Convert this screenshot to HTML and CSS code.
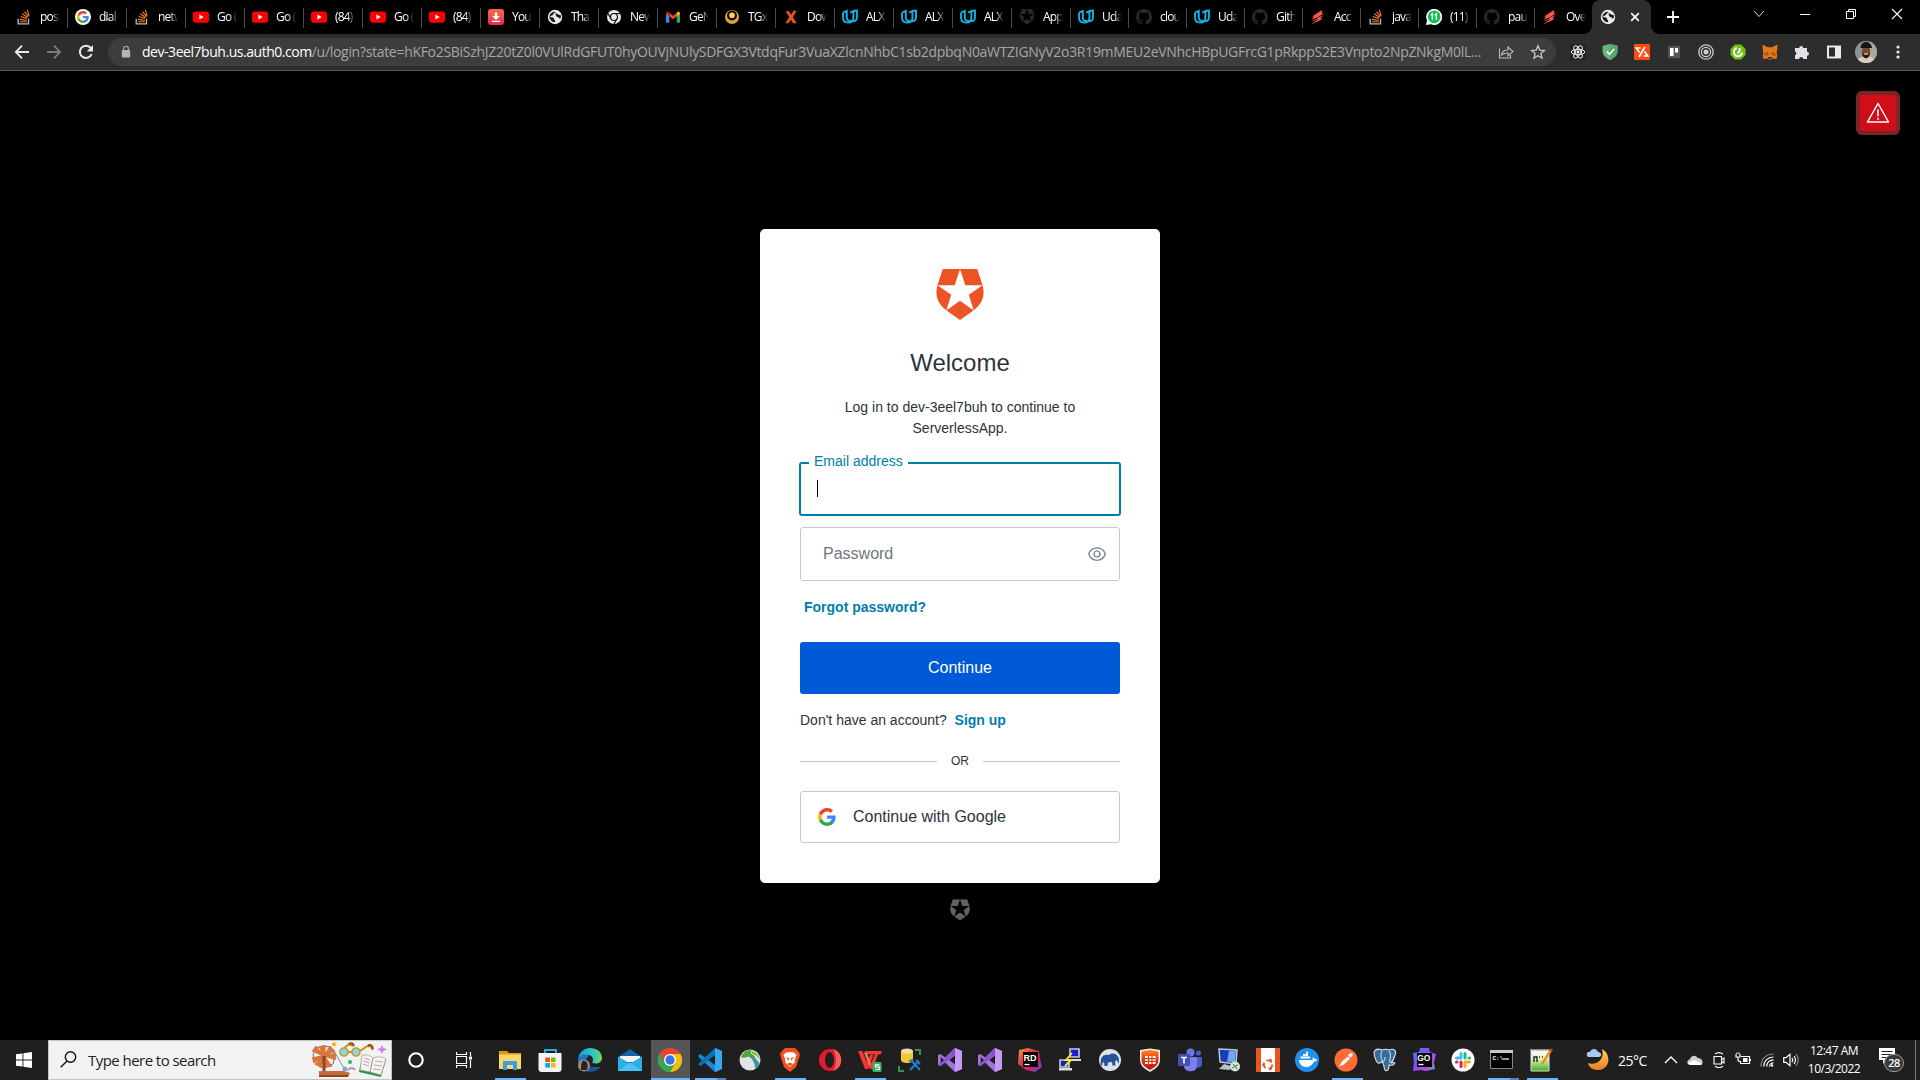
FILE: index.html
```html
<!DOCTYPE html>
<html lang="en">
<head>
<meta charset="utf-8">
<title>Log in | ServerlessApp</title>
<link rel="stylesheet" href="styles.css">
</head>
<body>
<svg class="defs" width="0" height="0" aria-hidden="true">
  <defs>
    <linearGradient id="gEdge" x1="0" y1="0" x2="1" y2="0"><stop offset="0" stop-color="#1b9de2"/><stop offset=".6" stop-color="#2fc3c9"/><stop offset="1" stop-color="#6fdc4c"/></linearGradient>
    <linearGradient id="gDl" x1="0" y1="0" x2="0" y2="1"><stop offset="0" stop-color="#ff6a3c"/><stop offset="1" stop-color="#e6275f"/></linearGradient>
    <linearGradient id="gRd" x1="0" y1="0" x2="1" y2="1"><stop offset="0" stop-color="#f7a12c"/><stop offset=".4" stop-color="#e5314b"/><stop offset=".7" stop-color="#d21c6b"/><stop offset="1" stop-color="#0b6cff"/></linearGradient>
    <linearGradient id="gGo" x1="0" y1="0" x2="1" y2="1"><stop offset="0" stop-color="#3b7cf0"/><stop offset=".45" stop-color="#8a4cf0"/><stop offset=".75" stop-color="#b04ce8"/><stop offset="1" stop-color="#28d18a"/></linearGradient>
    <linearGradient id="gMoon" x1="0" y1="0" x2="0" y2="1"><stop offset="0" stop-color="#ffce58"/><stop offset="1" stop-color="#ee7f22"/></linearGradient>
    <linearGradient id="gFort" x1="0" y1="0" x2="0" y2="1"><stop offset="0" stop-color="#ff8a1c"/><stop offset=".5" stop-color="#e0350f"/><stop offset="1" stop-color="#c0140f"/></linearGradient>
    <linearGradient id="gNote" x1="0" y1="0" x2="0" y2="1"><stop offset="0" stop-color="#fff"/><stop offset=".4" stop-color="#e4f4c0"/><stop offset="1" stop-color="#3fae20"/></linearGradient>
  </defs>
  <symbol id="so" viewBox="0 0 16 16"><path d="M2.200 9.800v5h10.300v-5" fill="none" stroke="#bcbbbb" stroke-width="1.300"/><path d="M4 12.700h6.800M4.100 10.400l6.700.8M4.800 7.500l6.300 2.100M6.300 4.800l5.300 3.700M8.600 2.600l4 5M11.300.9l1.900 6" stroke="#f48024" stroke-width="1.100" fill="none"/></symbol>
  <symbol id="google" viewBox="0 0 48 48"><path fill="#4285f4" d="M47 24.500c0-1.600-.1-3.200-.4-4.700H24v9h12.900c-.6 3-2.300 5.500-4.800 7.200v6h7.700C44.400 37.900 47 31.800 47 24.500z"/><path fill="#34a853" d="M24 48c6.500 0 11.900-2.100 15.900-5.800l-7.700-6C30 37.700 27.300 38.600 24 38.600c-6.300 0-11.600-4.200-13.500-9.900H2.600v6.200C6.500 42.600 14.600 48 24 48z"/><path fill="#fbbc05" d="M10.500 28.700c-1-3-1-6.300 0-9.300v-6.200H2.600a24 24 0 0 0 0 21.600z"/><path fill="#ea4335" d="M24 9.500c3.500 0 6.700 1.200 9.200 3.600l6.900-6.900C35.900 2.300 30.500 0 24 0 14.600 0 6.500 5.400 2.600 13.300l7.900 6.100C12.400 13.700 17.700 9.500 24 9.500z"/></symbol>
  <symbol id="gtab" viewBox="0 0 16 16"><circle cx="8" cy="8" r="8" fill="#fff"/><use href="#google" x="2" y="2" width="12" height="12"/></symbol>
  <symbol id="yt" viewBox="0 0 16 16"><rect y="2.400" width="16" height="11.400" rx="2.800" fill="#f00"/><path d="M6.400 5.600v5L10.700 8.100z" fill="#fff"/></symbol>
  <symbol id="dl" viewBox="0 0 16 16"><rect width="16" height="16" rx="3" fill="url(#gDl)"/><path d="M6.700 3.500h2.600v3.700H12L8 11 4 7.200h2.700zM4 11.700h8v1.300H4z" fill="#fff"/></symbol>
  <symbol id="globe" viewBox="0 0 16 16"><circle cx="8" cy="8" r="7.200" fill="#e8eaed"/><path d="M8.300 2.500c-1 1-.2 1.500-1.300 2-1 .3-.8 1.500-1.600 1.800L3 7.200c.5 1.300 2 1 3 1.300 1.500.3.500 1.700 1.500 2.200.8.500.7 1.500.6 2.300-1.500.4-3-.2-3.800-1.200C3 10.500 2.300 9 2.400 7.300 2.800 5 5 2.700 8.300 2.500z" fill="#1a1a1a"/><path d="M8.700 3.500c.6 1.500 2 1 2.500 1.800.6.900 1.300.9 2.300.6.500 1 .5 2.200.2 3.200-1 .8-2.200 0-2.600-1C9.800 7.900 9 7.400 8.800 6.500 9.400 5.500 8 4.500 8.700 3.500z" fill="#1a1a1a"/></symbol>
  <symbol id="chromeg" viewBox="0 0 16 16"><circle cx="8" cy="8" r="7" fill="#e8eaed"/><circle cx="8" cy="8" r="3.500" fill="none" stroke="#111" stroke-width="1.200"/><path d="M8 4.500h6.300M5 9.700L1.800 4.300M11 9.800L7.800 15.200" stroke="#111" stroke-width="1.200"/></symbol>
  <symbol id="gmail" viewBox="0 0 16 16"><path d="M1 4.500v8.300c0 .500.400.9.9.9h2.400V6.200z" fill="#4285f4"/><path d="M15 4.500v8.300c0 .500-.4.9-.9.9h-2.400V6.200z" fill="#34a853"/><path d="M4.300 3.800L8 6.800l3.700-3v3.600L8 10.300 4.300 7.400z" fill="#ea4335"/><path d="M1 4.200c0-1.400 1.500-2 2.600-1.100l.7.600v3.700L1 5z" fill="#c5221f"/><path d="M15 4.200c0-1.400-1.500-2-2.600-1.100l-.7.600v3.700L15 5z" fill="#fbbc04"/></symbol>
  <symbol id="tgx" viewBox="0 0 16 16"><circle cx="8" cy="8" r="7" fill="#d9a243"/><circle cx="8" cy="6.500" r="5" fill="#141008"/><circle cx="8" cy="6.200" r="2.800" fill="#ffd15c"/></symbol>
  <symbol id="xx" viewBox="0 0 16 16"><path d="M2.500 2.200h3.500l2.200 3.600L10.500 1.800h3.200L9.900 8.100l3.800 6.200h-3.600L8 10.700 5.500 14.300h-3.200l4-6.200z" fill="#e8531d"/></symbol>
  <symbol id="uda" viewBox="0 0 16 16"><path d="M1 3.700L4.800 2v6.500c0 3 2.500 4 4.600 3.300M5.800 13.600C2.800 13.600 1 11.600 1 8.300V3.700M8.200 3.700L11.400 2v6.700c0 3-2 5.400-5.600 4.900M11.400 2l3.600-.5v6.700c0 3-2.300 4.300-4.600 3.700" fill="none" stroke="#12b1e0" stroke-width="1.900"/></symbol>
  <symbol id="auth0" viewBox="0 0 48 52"><path fill-rule="evenodd" d="M6.800 0H41.200L46.500 16C49.500 27 46 35 37.500 41.500L24 51 10.500 41.500C2 35-1.500 27 1.500 16zM24 0L18.700 16.200H1.500L15.200 25.800 10.300 41.500 24 31.700 37.700 41.500 32.800 25.800 46.500 16.200H29.300z" fill="currentColor"/></symbol>
  <symbol id="git" viewBox="0 0 16 16"><path fill="currentColor" d="M8 0C3.580 0 0 3.580 0 8c0 3.540 2.290 6.530 5.470 7.590.4.070.55-.17.55-.38 0-.19-.01-.82-.01-1.490-2.010.37-2.530-.49-2.690-.94-.09-.23-.48-.94-.82-1.130-.28-.15-.68-.52-.01-.53.63-.01 1.080.58 1.230.82.72 1.210 1.870.87 2.330.66.070-.52.28-.87.51-1.070-1.780-.2-3.640-.89-3.640-3.950 0-.87.31-1.590.82-2.150-.08-.2-.36-1.020.08-2.120 0 0 .67-.21 2.200.82a7.600 7.600 0 0 1 4 0c1.530-1.040 2.200-.82 2.200-.82.44 1.100.16 1.920.08 2.120.51.56.82 1.270.82 2.150 0 3.070-1.870 3.750-3.650 3.950.29.25.54.73.54 1.480 0 1.070-.01 1.930-.01 2.200 0 .21.15.46.55.38A8.010 8.010 0 0 0 16 8c0-4.420-3.580-8-8-8z"/></symbol>
  <symbol id="bolt" viewBox="0 0 16 16"><path d="M12.500.8L2.500 7.200l1.200.8L1.500 10.500 9 7.700l5.300-4-2.600.6z" fill="#fd5750"/><path d="M13.800 6L6 9.500l2 .6L1.300 15.500 12.500 10l-2-.7z" fill="#fd5750"/><path d="M2.500 11.900l4-2" stroke="#fd5750" stroke-width=".9"/></symbol>
  <symbol id="wa" viewBox="0 0 16 16"><path d="M0 16l1-4.500A8 8 0 1 1 5 15.300z" fill="#fff"/><circle cx="8.200" cy="7.800" r="6.400" fill="#12c154"/><path d="M4.700 6.200l1.700-1.400v6M8.700 6.200l1.700-1.400v6" stroke="#fff" stroke-width="1.400" fill="none"/></symbol>
  <symbol id="vs" viewBox="0 0 24 24"><path d="M17 0l7 3v18l-7 3L7 14.500 2.500 18 0 17V7l2.500-1L7 9.500z" fill="#a074d8"/><path d="M17 0l7 3v18l-7 3z" fill="#c59af5"/><path d="M17 0v7.500L2.500 18 0 17z" fill="#8a55c8"/><path d="M17 7.500v9L11.500 12zM2.800 9v6l3-3z" fill="#1f1f1f"/></symbol>
</svg>

<header class="tabstrip">
  <div class="tab first"><svg><use href="#so"/></svg><span>post</span></div>
  <div class="tab"><svg><use href="#gtab"/></svg><span>dial</span></div>
  <div class="tab"><svg><use href="#so"/></svg><span>netw</span></div>
  <div class="tab"><svg><use href="#yt"/></svg><span>Go (</span></div>
  <div class="tab"><svg><use href="#yt"/></svg><span>Go (</span></div>
  <div class="tab"><svg><use href="#yt"/></svg><span>(84)</span></div>
  <div class="tab"><svg><use href="#yt"/></svg><span>Go (</span></div>
  <div class="tab"><svg><use href="#yt"/></svg><span>(84)</span></div>
  <div class="tab"><svg><use href="#dl"/></svg><span>You</span></div>
  <div class="tab"><svg><use href="#globe"/></svg><span>Tha</span></div>
  <div class="tab"><svg><use href="#chromeg"/></svg><span>New</span></div>
  <div class="tab"><svg><use href="#gmail"/></svg><span>GeN</span></div>
  <div class="tab"><svg><use href="#tgx"/></svg><span>TGx</span></div>
  <div class="tab"><svg><use href="#xx"/></svg><span>Dow</span></div>
  <div class="tab"><svg><use href="#uda"/></svg><span>ALX</span></div>
  <div class="tab"><svg><use href="#uda"/></svg><span>ALX</span></div>
  <div class="tab"><svg><use href="#uda"/></svg><span>ALX</span></div>
  <div class="tab dim"><svg><use href="#auth0"/></svg><span>App</span></div>
  <div class="tab narrow"><svg><use href="#uda"/></svg><span>Uda</span></div>
  <div class="tab narrow dim"><svg><use href="#git"/></svg><span>clou</span></div>
  <div class="tab narrow"><svg><use href="#uda"/></svg><span>Uda</span></div>
  <div class="tab narrow dim"><svg><use href="#git"/></svg><span>Gith</span></div>
  <div class="tab narrow"><svg><use href="#bolt"/></svg><span>Acc</span></div>
  <div class="tab narrow"><svg><use href="#so"/></svg><span>java</span></div>
  <div class="tab narrow"><svg><use href="#wa"/></svg><span>(11)</span></div>
  <div class="tab narrow dim"><svg><use href="#git"/></svg><span>paul</span></div>
  <div class="tab narrow"><svg><use href="#bolt"/></svg><span>Ove</span></div>
  <div class="tab active"><svg><use href="#globe"/></svg><svg class="close" viewBox="0 0 16 16"><path d="M4.200 4.200l7.600 7.600M11.800 4.200l-7.600 7.600" stroke="#fff" stroke-width="1.700"/></svg></div>
  <svg class="plus" viewBox="0 0 16 16"><path d="M8 2v12M2 8h12" stroke="#fff" stroke-width="1.800"/></svg>
  <div class="winctl">
    <svg viewBox="0 0 12 12"><path d="M1 3l5 5.500L11 3" stroke="#ddd" fill="none"/></svg>
    <svg viewBox="0 0 12 12"><path d="M1 6.500h10" stroke="#fff"/></svg>
    <svg viewBox="0 0 12 12"><path d="M1.500 3.500h7v7h-7zM3.500 3.500v-2h7v7h-2" stroke="#fff" fill="none"/></svg>
    <svg viewBox="0 0 12 12"><path d="M1 1l10 10M11 1L1 11" stroke="#fff" stroke-width="1.100"/></svg>
  </div>
</header>

<nav class="toolbar">
  <svg class="nav" viewBox="0 0 16 16"><path d="M15 8H2M8 1.700L1.800 8 8 14.300" stroke="#e8eaed" stroke-width="1.800" fill="none"/></svg>
  <svg class="nav" viewBox="0 0 16 16"><path d="M1 8h13M8 1.700L14.200 8 8 14.300" stroke="#7b7b7b" stroke-width="1.800" fill="none"/></svg>
  <svg class="nav" viewBox="0 0 16 16"><path d="M13.700 10A6.100 6.100 0 1 1 12.600 3.800" stroke="#e8eaed" stroke-width="2" fill="none"/><path d="M15 1v6.500H8.700z" fill="#e8eaed"/></svg>
  <div class="omnibox">
    <svg class="lock" viewBox="0 0 10 14"><path d="M2.500 6V3.800a2.500 2.500 0 0 1 5 0V6" stroke="#9aa0a6" stroke-width="1.300" fill="none"/><rect x=".8" y="5" width="8.400" height="7.500" rx="1" fill="#b0b3b8"/></svg>
    <div class="url"><b>dev-3eel7buh.us.auth0.com</b>/u/login?state=hKFo2SBiSzhJZ20tZ0l0VUlRdGFUT0hyOUVjNUlySDFGX3VtdqFur3VuaXZlcnNhbC1sb2dpbqN0aWTZIGNyV2o3R19mMEU2eVNhcHBpUGFrcG1pRkppS2E3Vnpto2NpZNkgM0lL...</div>
    <svg class="share" viewBox="0 0 16 16"><path d="M1.500 4.500v9.500h11v-3M3.500 11c.5-3.500 3-5 6.500-5V3l5 4.500-5 4.200V9C7 9 5 9.500 3.500 11z" stroke="#bdbdbd" stroke-width="1.100" fill="none"/></svg>
    <svg class="star" viewBox="0 0 16 16"><path d="M8 1.800l1.800 4.300 4.700.4-3.600 3 1.100 4.600L8 11.700 4 14.100l1.100-4.600-3.600-3 4.700-.4z" stroke="#c8c8c8" stroke-width="1.300" fill="none"/></svg>
  </div>
  <div class="exts">
    <svg viewBox="0 0 16 16"><rect width="16" height="16" fill="#232323"/><g fill="none" stroke="#eee" stroke-width="1"><ellipse cx="8" cy="8" rx="6.800" ry="2.700"/><ellipse cx="8" cy="8" rx="6.800" ry="2.700" transform="rotate(60 8 8)"/><ellipse cx="8" cy="8" rx="6.800" ry="2.700" transform="rotate(120 8 8)"/></g><circle cx="8" cy="8" r="1.400" fill="#fff"/></svg>
    <svg viewBox="0 0 16 16"><path d="M8 0l7.500 1.800v5.200c0 4-3 7-7.500 9-4.500-2-7.500-5-7.500-9V1.800z" fill="#67b279"/><path d="M8 0l7.500 1.800v5.200c0 4-3 7-7.500 9z" fill="#5aa56c"/><path d="M4.700 7.500L7.500 10.400 12 5" stroke="#fff" stroke-width="1.600" fill="none"/></svg>
    <svg viewBox="0 0 16 16"><rect width="16" height="16" rx="1" fill="#ff4a12"/><path d="M6.500 4H2.300l3.300 4.500M9.500 12h4.200L10.400 7.500M5 13l5.800-10" stroke="#fff" stroke-width="1.700" fill="none"/></svg>
    <svg viewBox="0 0 16 16"><rect x="2" y="2" width="12" height="12" fill="#555"/><path d="M4 4h3.600v8H4zM9 4h3v4.500H9z" fill="#fff"/></svg>
    <svg viewBox="0 0 16 16"><g fill="none" stroke="#ccc" stroke-width="1.300"><circle cx="8" cy="8" r="7.200"/><circle cx="8" cy="8" r="4.600"/></g><circle cx="8" cy="8" r="2.500" fill="#ccc"/></svg>
    <svg viewBox="0 0 16 16"><path d="M5 .5h6L15.500 5v6L11 15.500H5L.5 11V5z" fill="#6fc114"/><path d="M6.800 3.600C3.800 5 3.200 8.500 4.800 10.800c2.200 2.800 6.700 1.500 7.200-2.300M7.200 8.700c1.800.2 2.700-1.500 2.500-4.700" fill="none" stroke="#fff" stroke-width="2"/></svg>
    <svg viewBox="0 0 16 16"><path d="M.5.500L6 3.300h4L15.500.5l-.2 4.500-.7 4 .7 2.500-1 3.700-3.500-1-1.500 1.300H6.700l-1.500-1.300-3.500 1-1-3.700.7-2.500-.7-4z" fill="#e2761b"/><path d="M3 8.500l3 1-1.300 2.800-3.200-1zM13 8.500l-3 1 1.300 2.800 3.200-1z" fill="#b85b12"/><path d="M4.500 8.200l2 .8-.8 1zM11.500 8.200l-2 .8.800 1zM6.300 13h3.400l.3 1.500H6z" fill="#222"/></svg>
    <svg viewBox="0 0 16 16"><path d="M1 4h4.200a2 2 0 1 1 4 0H13v3.700a2 2 0 1 1 0 4V15H9.200a2 2 0 0 0-4 0H1v-3.800a2 2 0 0 0 0-3.800z" fill="#dfe1e5"/></svg>
    <svg viewBox="0 0 16 16"><path fill-rule="evenodd" d="M1 1.500h14v13H1zM3 3.500v9h6v-9z" fill="#e8eaed"/></svg>
    <svg class="avatar" viewBox="0 0 22 22"><clipPath id="av"><circle cx="11" cy="11" r="11"/></clipPath><g clip-path="url(#av)"><rect width="22" height="22" fill="#8f9294"/><rect x="14" width="8" height="22" fill="#aaa69e"/><path d="M2 22c0-5 4-7 9-6 6-1 9 2 9 6z" fill="#dccbbd"/><ellipse cx="11" cy="10.500" rx="4.200" ry="6" fill="#74482f"/><path d="M5.500 7C6-1 16-1 17 7z" fill="#171614"/><path d="M7 12c1 7 7 7 8 0l-2 1.500H9z" fill="#21150f"/><path d="M9.200 13h3.800" stroke="#fff" stroke-width="1.200"/></g></svg>
    <svg viewBox="0 0 16 16"><g fill="#e8eaed"><circle cx="8" cy="3" r="1.600"/><circle cx="8" cy="8" r="1.600"/><circle cx="8" cy="13" r="1.600"/></g></svg>
  </div>
</nav>

<main class="page">
  <div class="alert"><svg viewBox="0 0 24 22"><path d="M12 1.500L22.500 20H1.500z" fill="none" stroke="#fff" stroke-width="1.500" stroke-linejoin="round"/><path d="M12 7.500v6.800M12 15.800v1.900" stroke="#fff" stroke-width="1.600"/></svg></div>
  <section class="card">
    <svg class="logo" viewBox="0 0 48 52"><use href="#auth0"/></svg>
    <h1>Welcome</h1>
    <p class="sub">Log in to dev-3eel7buh to continue to ServerlessApp.</p>
    <div class="field email"><label>Email address</label><i class="caret"></i></div>
    <div class="field password"><span>Password</span><svg viewBox="0 0 18 14"><path d="M.7 7C3.500-1.300 14.500-1.300 17.300 7 14.500 15.300 3.500 15.300.7 7z" fill="none" stroke="#6f7780" stroke-width="1.200"/><circle cx="9" cy="7" r="3" fill="none" stroke="#6f7780" stroke-width="1.200"/></svg></div>
    <a class="forgot">Forgot password?</a>
    <button class="primary">Continue</button>
    <p class="signup">Don't have an account? <a>Sign up</a></p>
    <div class="or"><span>OR</span></div>
    <button class="social"><svg><use href="#google"/></svg>Continue with Google</button>
  </section>
  <svg class="badge" viewBox="0 0 48 52"><use href="#auth0"/></svg>
</main>

<footer class="taskbar">
  <div class="start"><svg viewBox="0 0 16 16"><path d="M0 2.300l6.500-.9v6.100H0zM7.400 1.200L16 0v7.500H7.400zM0 8.400h6.500v6.200L0 13.700zM7.400 8.400H16V16l-8.600-1.200z" fill="#fff"/></svg></div>
  <div class="search">
    <svg class="glass" viewBox="0 0 17 17"><circle cx="10.500" cy="6" r="5.200" fill="none" stroke="#111" stroke-width="1.400"/><path d="M7 10L.7 16.300" stroke="#111" stroke-width="1.400"/></svg>
    <span>Type here to search</span>
    <svg class="doodle" viewBox="0 0 76 36"><path d="M11 4l8 1 4 8-2 9-9 3-9-4-2-8 3-7z" fill="none" stroke="#647089"/><path d="M12 14L8 5l5-1zM12 14l6-9 4 4zM12 14l11-2v5zM12 14l7 10-5 1zM12 14l-3 11-5-3zM12 14L2 20l-1-4zM12 14L1 9l3-4z" fill="#d9773c" stroke="#d9773c" stroke-width="1.800"/><path d="M12 14v16" stroke="#8e4722" stroke-width="3"/><path d="M7 29h25l6 2-2 4H7z" fill="#c66d36"/><path d="M7 33h29v2H7z" fill="#8e4722"/><path d="M22 9l8 14 5 6" fill="none" stroke="#7f8aa0"/><circle cx="33" cy="27" r="2.500" fill="#8fa4cc"/><path d="M36 28q4-4 7 0" stroke="#9c7fb5" fill="none" stroke-width="1.500"/><path d="M29 9l8-7 4 2M48 9l9-6 4 5M36 10h5" fill="none" stroke="#c98c14" stroke-width="2"/><path d="M37 2q4-2 5 2M56 4q4-3 5 3" fill="none" stroke="#8a4d2b" stroke-width="2"/><circle cx="32" cy="10" r="4" fill="#7adcf5" stroke="#d79a17" stroke-width="1.600"/><circle cx="44" cy="10" r="4" fill="#7adcf5" stroke="#d79a17" stroke-width="1.600"/><circle cx="22" cy="2.300" r="2" fill="#ffb000"/><circle cx="38" cy="20" r="2" fill="#21bd5b"/><path d="M70 3l1.500 3L75 7.500 71.500 9 70 12l-1.500-3L65 7.500 68.500 6z" fill="#d77bf2"/><path d="M50 15l-3 15 22 5 5-17z" fill="#2e9140"/><path d="M50 13l-2 15 10 2 3-14q-4-4-11-3zM61 16l-3 14 11 3 5-16q-6-4-13-1z" fill="#f8f3ef" stroke="#8fa08f" stroke-width=".7"/><path d="M52 16l6 2M51.500 19l6 2M51 22l6 2M63 19l8 1M62 23l8 1M61 27l8 1" stroke="#b6a5c0"/></svg>
  </div>
  <div class="sys"><svg viewBox="0 0 16 16"><circle cx="8" cy="8" r="6.700" fill="none" stroke="#fff" stroke-width="2.100"/></svg></div>
  <div class="sys"><svg viewBox="0 0 16 16"><path d="M.5 0v2.500h10V0M.5 16v-2.500h10V16M.5 4.500h10v7H.5zM14.500 0v4M14.500 8v8" fill="none" stroke="#fff" stroke-width="1.200"/><path d="M13 4.500h3v3h-3z" fill="#fff"/></svg></div>
  <div class="apps">
    <div class="app run"><svg viewBox="0 0 24 24"><path d="M1 3h8l2 2h12v15H1z" fill="#dc9a12"/><path d="M1 6.500h22V21H1z" fill="#fcd667"/><path d="M5 13h14v9h-4v-5H9v5H5z" fill="#3f9be2"/></svg></div>
    <div class="app"><svg viewBox="0 0 24 24"><path d="M7 6V2h11v4" fill="none" stroke="#23afe5" stroke-width="2"/><path d="M.5 5h23v16q0 3-3 3h-17q-3 0-3-3z" fill="#f4f4f4"/><path d="M7.300 9.500H12v4.500H7.300z" fill="#f25022"/><path d="M13 9.500h4.500v4.500H13z" fill="#7fba00"/><path d="M7.300 15H12v4.500H7.300z" fill="#00a4ef"/><path d="M13 15h4.500v4.500H13z" fill="#ffb900"/></svg></div>
    <div class="app"><svg viewBox="0 0 24 24"><path d="M.5 11C1-4 24-3 24 10c0 5-6 7-10 4.500 3-4-1-8-5-7.500C5 7 1 9 .5 11z" fill="url(#gEdge)"/><path d="M0 12c1-5 7-7 11-4-5 3-4 13 11 11-5 7-22 7-22-7z" fill="#1e78c2"/><path d="M9.500 9c-4 5 2 13 12.500 10-6 7-17 3-16-4 0-3 1-5 3.500-6z" fill="#15539a"/><circle cx="6" cy="17.500" r="6" fill="#9b8c80"/><path d="M3 22c0-8 1-10 4-9s3 5 2 9z" fill="#30211b"/></svg></div>
    <div class="app"><svg viewBox="0 0 24 24"><path d="M0 9l12-8 12 8v5H0z" fill="#1262ae"/><path d="M2 8h20v6H2z" fill="#f5f5f5"/><path d="M0 8.500l12 7 12-7V23H0z" fill="#29aee8"/><path d="M0 23l12-9 12 9z" fill="#48c4f5"/></svg></div>
    <div class="app current"><svg viewBox="0 0 24 24"><circle cx="12" cy="12" r="12" fill="#34a853"/><path d="M12 12L1.600 6A12 12 0 0 1 22.400 6z" fill="#ea4335"/><path d="M12 6h10.400A12 12 0 0 1 12 24l5-9z" fill="#fbbc05"/><path d="M1.600 6l5.200 9L12 12z" fill="#ea4335"/><path d="M1.600 6A12 12 0 0 0 12 24l5.200-9H6.800z" fill="#34a853"/><circle cx="12" cy="12" r="6" fill="#fff"/><circle cx="12" cy="12" r="4.700" fill="#3574e8"/></svg></div>
    <div class="app run multi"><svg viewBox="0 0 24 24"><path d="M17 0l7 3v18l-7 3L2 10.500 0 8l2-2 3 2 12 9z" fill="#1a8ad4"/><path d="M17 0v7L2.500 18 0 16z" fill="#0d6fb5"/><path d="M17 0l7 3v18l-7 3z" fill="#35a8f0"/></svg></div>
    <div class="app"><svg viewBox="0 0 24 24"><circle cx="12" cy="12" r="10.500" fill="#dfe3e3"/><path d="M3 9C5 4 9 1 14 2.500c-2 1.500-1 3.500 1 4.500 3 1.500 3 5 1 8-1-4-4-7-7-6-2 .5-4 1.500-6 0z" fill="#55a63a"/><path d="M11 8c4-1 8 4 11 8-1 2-3 4-5 5 .5-5-2-10-6-13z" fill="#3c93a8"/><path d="M14 3c4 1 7 4 8 8-2-1-3-3-5-4-2 0-4-2-3-4z" fill="#7cc04c"/></svg></div>
    <div class="app run"><svg viewBox="0 0 24 24"><path d="M7 0h10l3 3 2 3-1 4-3 9-6 5-6-5-3-9-1-4 2-3z" fill="#f4501e"/><path d="M12 4l4 .5 2.500 2.500-2 5 .5 2-5 5-5-5 .5-2-2-5L8 4.500z" fill="#fff"/><path d="M8 9l3 1v3zM16 9l-3 1v3zM9 16l3-1.500 3 1.500-3 2z" fill="#f4501e"/></svg></div>
    <div class="app"><svg viewBox="0 0 24 24"><circle cx="12" cy="12" r="11" fill="#e31b2f"/><path d="M15 1c11 3 11 19 0 22 4-6 4-16 0-22z" fill="#ff5a5f"/><ellipse cx="11.500" cy="12" rx="4.500" ry="7.700" fill="#1f1f1f"/></svg></div>
    <div class="app run"><svg viewBox="0 0 24 24"><path d="M0 3h4.500L9 15l3-8h3.500L10 21H7z" fill="#f2392e"/><path d="M8 3h16l-1.500 3.500H20L14.500 21h-3L8.500 13l1.500-3 3 5.500L17 6.500H9.500z" fill="#f2392e"/><path d="M8 3l5 12-1.500 3L6 5z" fill="#ff7061"/><rect x="14.500" y="14" width="9" height="10" rx="1.500" fill="#3eae63"/><path d="M21.500 16.800h-4v2.200h4v2.500h-4" stroke="#fff" fill="none" stroke-width="1.200"/></svg></div>
    <div class="app"><svg viewBox="0 0 24 24"><path d="M3 3v9c0 4 12 4 12 0V3z" fill="#f4c92f"/><ellipse cx="9" cy="3.200" rx="6" ry="2.700" fill="#f8d9a8"/><path d="M17 2h5v5M6 23H1v-5" fill="none" stroke="#3b9445" stroke-width="2"/><path d="M12 22l9-9M13 12l9 10M18 12l4 4M11 13l4-1" stroke="#237ed0" stroke-width="2"/></svg></div>
    <div class="app"><svg><use href="#vs"/></svg></div>
    <div class="app"><svg><use href="#vs"/></svg></div>
    <div class="app"><svg viewBox="0 0 24 24"><path d="M1 2l9-2 11 3 1 8 2 8-7 5-9-2-8-6z" fill="url(#gRd)"/><rect x="5" y="4" width="15" height="15" fill="#000"/><text x="5.500" y="12.500" class="ide">RD</text><path d="M6.500 16.500h5" stroke="#fff" stroke-width="1.300"/></svg></div>
    <div class="app"><svg viewBox="0 0 24 24"><path d="M12 1h9v8h-9zM2 12h9v7H2z" fill="#1220d8" stroke="#ccc" stroke-width="1.600"/><path d="M10 11h13v2H10zM1 20h13v2.500H1z" fill="#ddd"/><path d="M14 5l-6 7h5l-6 6" fill="none" stroke="#ffec1f" stroke-width="1.800"/></svg></div>
    <div class="app"><svg viewBox="0 0 24 24"><circle cx="12" cy="12" r="11" fill="#dde2e7"/><path d="M3 11c1-4 5-5 8-4 3-2.500 7-1.500 8.500 1 1.500 1.500 1.500 4 1.500 6l-1 1.500-1-3.500-2 1.500.5 4h-3l-.5-3.500-4 .5-.5 3.500H6.500L6 14l-1.500 1L4 18l-1.500-1z" fill="#24539b"/></svg></div>
    <div class="app"><svg viewBox="0 0 24 24"><path d="M2 2l10-1.500L22 2v10c0 6-5 9-10 12C7 21 2 18 2 12z" fill="#eee"/><path d="M3.500 3.500L12 2l8.500 1.500V12c0 5-4 7.500-8.500 10-4.500-2.500-8.500-5-8.500-10z" fill="url(#gFort)"/><path d="M7 8h10.500v8H7z" fill="#fff"/><path d="M7 10.700h10.500M7 13.300h10.500M10.500 8v8M14 8v8" stroke="#dc3a12" stroke-width="1.200"/></svg></div>
    <div class="app"><svg viewBox="0 0 24 24"><circle cx="12.500" cy="4.500" r="4" fill="#6c76dd"/><circle cx="20.500" cy="5" r="2.600" fill="#4d59c4"/><path d="M16 9h8v8q-2 4-6 2z" fill="#4d59c4"/><path d="M6 9h13v9c0 7-13 7-13 0z" fill="#7681ea"/><rect y="6" width="12" height="12" rx="1" fill="#444eb4"/><path d="M3 9.500h6M6 9.500v6" stroke="#fff" stroke-width="1.600"/></svg></div>
    <div class="app slim"><svg viewBox="0 0 24 24"><path d="M2 1l18 1-1 14-16-2z" fill="#183bb9" stroke="#bcc6cd" stroke-width="1.500"/><path d="M12 3l7-.5-1 12-8-1z" fill="#6fa6ef"/><path d="M7 16l7 2-1 4-11-1z" fill="#bbc2c7"/><circle cx="18" cy="18.500" r="5" fill="#d8e4d8"/><path d="M15 20l3-1.500L16 16M21 17l-3 1 2 3" stroke="#31883d" fill="none"/></svg></div>
    <div class="app n"><svg viewBox="0 0 24 24"><path d="M0 0h24v24H0z" fill="#e95420"/><path d="M5 0h14v24H5z" fill="#fff"/><circle cx="12" cy="16.500" r="4.200" fill="none" stroke="#e95420" stroke-width="1.800" stroke-dasharray="6 2.800"/><circle cx="7.500" cy="17" r="1.300" fill="#e95420"/><circle cx="14.500" cy="12" r="1.300" fill="#e95420"/><circle cx="14.500" cy="21" r="1.300" fill="#e95420"/></svg></div>
    <div class="app n"><svg viewBox="0 0 24 24"><circle cx="12" cy="12" r="12" fill="#1f91ee"/><path d="M4 12h13c1 0 1-2 .5-3l3 2.200 2 .3c-.7 1.500-2 2-3.500 2-4 9-15 6-15-1.500z" fill="#fff"/><path d="M5.500 9.500h9.500M8 7h5M11 4.700h2" stroke="#fff" stroke-width="2"/></svg></div>
    <div class="app n run"><svg viewBox="0 0 24 24"><circle cx="12" cy="12" r="11.500" fill="#ff6c37"/><path d="M5 18.500l3-5 6-5 2 2-6 6zM14 7.500l1.500-2 3-.5v3l-2 1.500z" fill="#fff"/></svg></div>
    <div class="app n"><svg viewBox="0 0 24 24"><path d="M8 14C4 19 1 8 1 4c2-4 6-3 8-2 3-1 5-1 7 0 5-2 8 1 6 5-1 4-2 6-4 8 3-1 5 0 3 1-1 2-4 1-5 1 0 7-5 8-5 1l-1-3z" fill="#376b98" stroke="#d9e4ed" stroke-width="1.100"/><path d="M9 3c-2 4-1 8 1 11M16 3c3 4 0 8 1 12M9 13c2 1 3-1 3-4" fill="none" stroke="#e4edf4" stroke-width="1"/></svg></div>
    <div class="app n"><svg viewBox="0 0 24 24"><path d="M1 5l6-1 1-4h9l1 4 6 2-2 9 1 6-9 2-5-1-8 1 1-8z" fill="url(#gGo)"/><rect x="5" y="5" width="15" height="14" fill="#000"/><text x="5.200" y="13" class="ide go">GO</text><path d="M6.500 16.500h5" stroke="#fff" stroke-width="1.300"/></svg></div>
    <div class="app n"><svg viewBox="0 0 24 24"><circle cx="12" cy="12" r="11.500" fill="#fff"/><g stroke-width="3" stroke-linecap="round"><path d="M10 5.500v4.500M5.500 10H10" stroke="#36c5f0"/><path d="M14 5.500V10M18.500 10H18" stroke="#2eb67d"/><path d="M14 14v4.500M14 14h4.500" stroke="#ecb22e"/><path d="M5.500 14H6M10 14v4.500" stroke="#e01e5a"/></g></svg></div>
    <div class="app n run multi"><svg viewBox="0 0 24 24"><path d="M.5 2.500h22v18H.5z" fill="#000" stroke="#888"/><path d="M0 2h23v3H0z" fill="#c9c9c9"/><text x="2.500" y="11.500" class="cmd">C:\</text><path d="M13 11h6" stroke="#fff" stroke-width="1.200"/></svg></div>
    <div class="app n run"><svg viewBox="0 0 24 24"><path d="M2 2h18v21H2z" fill="url(#gNote)" stroke="#ddd"/><path d="M1 2h20" stroke="#999" stroke-width="2" stroke-dasharray="1.500 1.500"/><path d="M5 14V9h3v5M10 9h1M13 9h1" stroke="#222" stroke-width="1.400" fill="none"/><path d="M22 2l-9 14" stroke="#e69a22" stroke-width="2.700"/><path d="M23 1l-1.500 2.300" stroke="#c93a2b" stroke-width="3"/></svg></div>
  </div>
  <div class="tray">
    <svg class="moon" viewBox="0 0 24 24"><path d="M16 1c10 5 8 21-4 21C6 22 3 19 2 15c9 3 17-4 14-14z" fill="url(#gMoon)"/><path d="M2 9c-3-3 0-6 2-5 1-4 7-4 8 0 4 0 4 5 1 5z" fill="#a9c8f5"/></svg>
    <span class="temp">25°C</span>
    <svg class="t chev" viewBox="0 0 16 16"><path d="M2 11l6-6 6 6" fill="none" stroke="#fff" stroke-width="1.400"/></svg>
    <svg class="t" viewBox="0 0 16 16"><path d="M3 13c-4-1-3-5-.3-5.500C4 3 9 2.500 10.500 6 15 6 17 10 14.500 12.500L13 13z" fill="#cfcfcf"/><path d="M.5 11.500l6.500-3.500 8.500 4-2 1H3z" fill="#fff"/></svg>
    <svg class="t" viewBox="0 0 16 16"><path d="M3 4.500h7.500v7.500H3zM10.500 7.500L13 6v5l-2.500-1.500M4 2Q8-.8 12 2M4 14.300q4 2.600 8 0" fill="none" stroke="#fff" stroke-width="1.100"/></svg>
    <svg class="t" viewBox="0 0 16 16"><path d="M6 4.500h8.500v7H5.500V9M15.500 7v2M1 2v3h4V2M2 .5V2M4 .5V2M3 5v3q0 1.500 3 1.500" fill="none" stroke="#fff" stroke-width="1.200"/><path d="M8 6h4.500v4H8z" fill="#fff"/></svg>
    <svg class="t" viewBox="0 0 16 16"><g fill="none" stroke-width="1.200"><path d="M2 14.500C2 7 7 2 14.500 2" stroke="#888"/><path d="M4.800 14.500C4.800 9 9 5 14.500 5M7.700 14.500c0-4 3-6.700 6.800-6.700M10.500 14.500c0-2 1.700-3.700 4-3.700" stroke="#fff"/></g><circle cx="13" cy="13.500" r="1.200" fill="#fff"/></svg>
    <svg class="t" viewBox="0 0 16 16"><path d="M.7 5.700H3l4-3.500v11.600l-4-3.500H.7z" fill="none" stroke="#fff" stroke-width="1.200"/><path d="M9 5.800q1.600 2.200 0 4.400M11 4q3 4 0 8" fill="none" stroke="#fff" stroke-width="1.200"/><path d="M13 2.200q4.500 5.800 0 11.600" fill="none" stroke="#888" stroke-width="1.200"/></svg>
    <div class="clock"><span>12:47 AM</span><span>10/3/2022</span></div>
    <div class="notif"><svg viewBox="0 0 16 16"><path d="M0 0h16v12H7l-3 4v-4H0z" fill="#fff"/><path d="M2.500 3.500h11M2.500 6.500h11M2.500 9.500h7" stroke="#222"/></svg><b>28</b></div>
    <i class="peek"></i>
  </div>
</footer>
</body>
</html>
```
FILE: styles.css
```css
* { box-sizing: border-box; }
body { margin: 0; width: 1920px; height: 1080px; overflow: hidden; background: #000; display: flex; flex-direction: column; font-family: "Open Sans", "Noto Sans", sans-serif; }
svg { display: block; flex: none; }
.defs { position: absolute; }

/* tab strip */
.tabstrip { height: 34px; flex: none; display: flex; padding-left: 8px; background: #000; }
.tab { width: 59px; height: 34px; flex: none; display: flex; align-items: center; padding-left: 8px; background: linear-gradient(#4a4a4a, #4a4a4a) 0 8px / 1px 20px no-repeat; }
.tab.narrow { width: 58px; }
.tab.first { background: none; }
.tab svg { width: 16px; height: 16px; }
.tab span { margin-left: 8px; width: 20px; overflow: hidden; white-space: nowrap; font-size: 12px; letter-spacing: -0.8px; line-height: 18px; color: #fff; -webkit-mask-image: linear-gradient(90deg, #000 60%, transparent); mask-image: linear-gradient(90deg, #000 60%, transparent); }
.tab.dim svg { color: #24292f; }
.tab.active { position: relative; width: 59px; background: #2d2d2d; border-radius: 8px 8px 0 0; }
.tab.active::before, .tab.active::after { content: ""; position: absolute; bottom: 0; width: 8px; height: 8px; }
.tab.active::before { left: -8px; background: radial-gradient(circle at 0 0, transparent 7.5px, #2d2d2d 8px); }
.tab.active::after { right: -8px; background: radial-gradient(circle at 100% 0, transparent 7.5px, #2d2d2d 8px); }
.tab .close { margin-left: 11px; }
.plus { width: 16px; height: 16px; margin: 9px 0 0 14px; }
.winctl { margin-left: auto; display: flex; gap: 34px; padding: 8px 17px 0 0; }
.winctl svg { width: 12px; height: 12px; }

/* toolbar */
.toolbar { height: 37px; flex: none; display: flex; align-items: center; background: #2d2d2d; border-bottom: 1px solid #585858; padding-left: 14px; }
.nav { width: 16px; height: 16px; margin-right: 16px; }
.omnibox { width: 1448px; height: 28px; margin-left: -2px; border-radius: 14px; background: #3d3d3d; display: flex; align-items: center; padding-left: 13px; }
.lock { width: 10px; height: 14px; }
.url { margin-left: 11px; width: 1356px; white-space: nowrap; font-size: 14px; line-height: 20px; letter-spacing: -0.3px; color: #a6a6a6; overflow: hidden; }
.url b { font-weight: 400; color: #fff; letter-spacing: -0.46px; }
.share { width: 16px; height: 16px; }
.star { width: 16px; height: 16px; margin-left: 16px; }
.exts { display: flex; align-items: center; gap: 16px; margin-left: 14px; }
.exts svg { width: 16px; height: 16px; }
.exts svg.avatar { width: 22px; height: 22px; margin: 0 -3px; }

/* login page */
.page { flex: 1; position: relative; display: flex; flex-direction: column; align-items: center; padding-top: 158px; font-family: "Liberation Sans", Arial, sans-serif; color: #2d333a; }
.alert { position: absolute; right: 20px; top: 20px; width: 44px; height: 44px; border-radius: 6px; border: 4px solid #7d2427; background: #d00e17; display: flex; align-items: center; justify-content: center; }
.alert svg { width: 24px; height: 22px; }
.card { width: 400px; height: 654px; background: #fff; border-radius: 5px; padding: 40px 40px 0; display: flex; flex-direction: column; }
.logo { width: 48px; height: 52px; align-self: center; color: #eb5424; }
.card h1 { margin: 24px 0 0; font-size: 24px; line-height: 36px; font-weight: 400; text-align: center; }
.sub { margin: 16px auto 0; width: 260px; font-size: 14px; line-height: 21px; text-align: center; }
.field { position: relative; height: 54px; border-radius: 3px; border: 1px solid #c2c8d0; display: flex; align-items: center; }
.email { border: 2px solid #007ead; margin: 23px -1px 0; padding-left: 16px; }
.email label { position: absolute; left: 8px; top: -13px; padding: 0 5px; font-size: 14px; line-height: 20px; color: #007ead; background: #fff; }
.caret { width: 1px; height: 17px; background: #000; margin-top: -2px; }
.password { margin-top: 11px; padding: 0 13px 0 22px; justify-content: space-between; font-size: 16px; color: #6f7780; }
.password svg { width: 18px; height: 14px; margin-top: -1px; }
.forgot { margin: 16px 0 0 4px; font-size: 14px; line-height: 21px; font-weight: 700; color: #007ead; }
.primary, .social { height: 52px; flex: none; border-radius: 3px; font: 16px "Liberation Sans", Arial, sans-serif; }
.primary { margin-top: 24px; border: 0; background: #0059d6; color: #fff; padding-bottom: 1px; }
.signup { margin: 16px 0 0; font-size: 14px; line-height: 21px; }
.signup a { margin-left: 4px; color: #007ead; font-weight: 700; }
.or { display: flex; align-items: center; height: 20px; margin-top: 20px; font-size: 12px; }
.or span { width: 46px; text-align: center; }
.or::before, .or::after { content: ""; flex: 1; height: 1px; background: #c2c8d0; }
.social { margin-top: 20px; border: 1px solid #c2c8d0; background: #fff; color: #2d333a; display: flex; align-items: center; padding: 0 0 1px 17px; gap: 17px; }
.social svg { width: 18px; height: 18px; margin-top: 1px; }
.badge { width: 20px; height: 22px; margin-top: 16px; color: #626262; }

/* taskbar */
.taskbar { height: 40px; flex: none; display: flex; background: #1f1f1f; color: #fff; }
.start, .sys { width: 48px; display: flex; align-items: center; justify-content: center; }
.start svg, .sys svg { width: 16px; height: 16px; }
.search { width: 344px; background: #f2f2f2; border: 1px solid #c4c4c4; display: flex; align-items: center; padding-left: 11px; color: #222; }
.glass { width: 17px; height: 17px; margin-top: -2px; }
.search span { margin-left: 11px; font-size: 15px; letter-spacing: -0.55px; width: 224px; white-space: nowrap; }
.doodle { width: 76px; height: 36px; }
.apps { display: flex; padding-left: 2px; }
.app { width: 40px; height: 40px; position: relative; display: flex; align-items: center; justify-content: center; }
.app.slim { width: 38.5px; }
.app.n { width: 39px; }
.app svg { width: 24px; height: 24px; }
.app.run::after, .app.current::after { content: ""; position: absolute; left: 5px; width: 31px; bottom: 0; height: 2px; background: #70b0f5; }
.app.current { width: 39px; margin: 0 0 0 1px; padding-right: 1px; background: #565656; }
.app.current::after { left: 0; width: 39px; }
.app.multi::after { background: linear-gradient(90deg, #70b0f5 22px, #5583b5 22px); }
.ide { font: 700 9px "Liberation Sans", sans-serif; fill: #fff; }
.ide.go { font-size: 8.5px; }
.cmd { font: 700 6px "Liberation Mono", monospace; fill: #fff; }
.tray { margin-left: auto; display: flex; align-items: center; }
.moon { width: 24px; height: 24px; }
.temp { width: 31px; margin: 0 14px 0 8px; font-size: 14px; letter-spacing: -0.5px; white-space: nowrap; }
.t { width: 16px; height: 16px; margin-right: 8px; }
.clock { width: 54px; display: flex; flex-direction: column; align-items: center; font-size: 12px; line-height: 18px; letter-spacing: -0.5px; white-space: nowrap; }
.notif { position: relative; width: 26px; height: 24px; margin-left: 18px; }
.notif svg { width: 16px; height: 16px; }
.notif b { position: absolute; left: 5px; top: 6px; width: 20px; height: 18px; border: 1px solid #999; border-radius: 9px; background: #3a3a3a; font-size: 11px; line-height: 16px; font-weight: 600; text-align: center; letter-spacing: -0.5px; }
.peek { width: 1px; height: 40px; margin: 0 4px 0 10px; background: #777; }
```
